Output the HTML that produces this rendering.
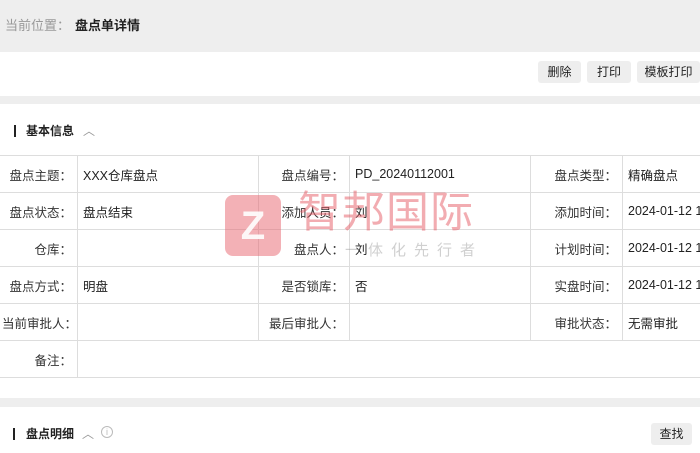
<!DOCTYPE html>
<html><head><meta charset="utf-8"><style>
*{margin:0;padding:0;box-sizing:border-box}
body{width:700px;height:453px;overflow:hidden;background:#fff;font-family:"Liberation Sans","Noto Sans CJK SC",sans-serif;font-size:12px;color:#222;position:relative}
.hdr{position:absolute;left:0;top:0;width:700px;height:52px;background:#eeeeee}
.hdr span{position:absolute;top:15px;font-size:13px}
.btn{position:absolute;top:61px;height:22px;background:#eeeeee;border-radius:3px;font-size:12px;line-height:22px;text-align:center;color:#222}
.strip{position:absolute;left:0;width:700px;background:#eeeeee}
.ttl{position:absolute;font-size:12px;font-weight:bold;color:#222}
.bar{position:absolute;width:2px;height:12px;background:#222}
table{position:absolute;left:-1px;top:155px;border-collapse:collapse;table-layout:fixed;width:732px}
td{border:1px solid #dddddd;height:37px;padding:0 5px;font-size:12.5px;white-space:nowrap;overflow:hidden}
td.l{text-align:right;color:#333}
.wm{position:absolute;color:rgba(230,90,100,.5)}
</style></head><body>
<div class="hdr"><span style="left:5px;color:#999">当前位置：</span><span style="left:75px;font-weight:bold;color:#222">盘点单详情</span></div>
<div class="btn" style="left:538px;width:43px">删除</div>
<div class="btn" style="left:587px;width:44px">打印</div>
<div class="btn" style="left:637px;width:63px">模板打印</div>
<div class="strip" style="top:96px;height:8px"></div>
<div class="bar" style="left:14px;top:125px"></div>
<div class="ttl" style="left:26px;top:122px">基本信息</div>
<div style="position:absolute;left:83px;top:122px;color:#999;font-size:12px">︿</div>
<table>
<colgroup><col style="width:78px"><col style="width:181px"><col style="width:91px"><col style="width:181px"><col style="width:92px"><col style="width:109px"></colgroup>
<tr><td class="l">盘点主题：</td><td>XXX仓库盘点</td><td class="l">盘点编号：</td><td>PD_20240112001</td><td class="l">盘点类型：</td><td>精确盘点</td></tr>
<tr><td class="l">盘点状态：</td><td>盘点结束</td><td class="l">添加人员：</td><td>刘</td><td class="l">添加时间：</td><td>2024-01-12 1</td></tr>
<tr><td class="l">仓库：</td><td></td><td class="l">盘点人：</td><td>刘</td><td class="l">计划时间：</td><td>2024-01-12 1</td></tr>
<tr><td class="l">盘点方式：</td><td>明盘</td><td class="l">是否锁库：</td><td>否</td><td class="l">实盘时间：</td><td>2024-01-12 1</td></tr>
<tr><td class="l" style="padding:0">当前审批人：</td><td></td><td class="l">最后审批人：</td><td></td><td class="l">审批状态：</td><td>无需审批</td></tr>
<tr><td class="l">备注：</td><td colspan="5"></td></tr>
</table>
<div style="position:absolute;left:225px;top:195px;width:56px;height:61px;background:rgba(232,100,110,.5);border-radius:8px"></div>
<div style="position:absolute;left:237px;top:208px;width:32px;height:36px;color:#fff;font:bold 40px/36px 'Liberation Sans',sans-serif;text-align:center;opacity:.9">Z</div>
<div class="wm" style="left:298px;top:190px;font-size:43px;line-height:46px;letter-spacing:1px">智邦国际</div>
<div style="position:absolute;left:345px;top:239px;font-size:15px;color:rgba(150,150,150,.45);letter-spacing:8px">一体化先行者</div>
<div class="strip" style="top:398px;height:9px"></div>
<div class="bar" style="left:13px;top:428px"></div>
<div class="ttl" style="left:26px;top:425px">盘点明细</div>
<div style="position:absolute;left:82px;top:425px;color:#999">︿</div>
<div style="position:absolute;left:101px;top:426px;width:12px;height:12px;border:1px solid #bbb;border-radius:50%;color:#bbb;font-size:9px;line-height:10px;text-align:center">i</div>
<div class="btn" style="left:651px;top:423px;width:41px">查找</div>
</body></html>
